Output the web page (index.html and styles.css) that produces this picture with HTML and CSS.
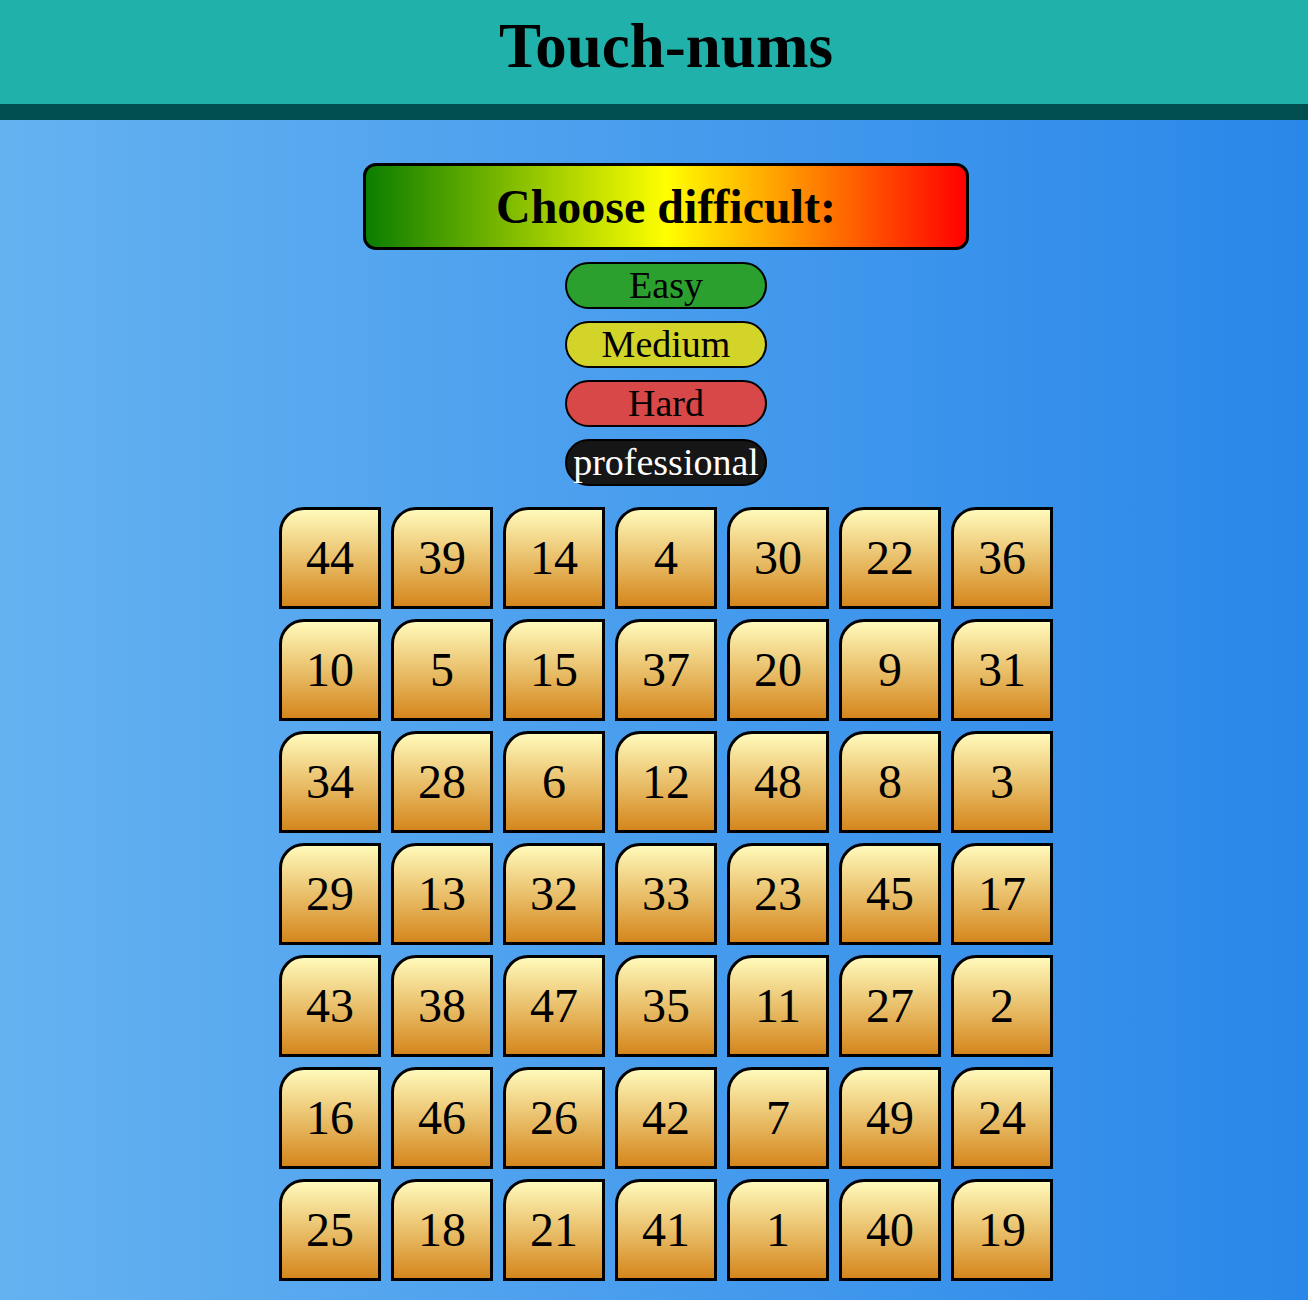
FILE: index.html
```html
<!DOCTYPE html>
<html lang="en">
<head>
<meta charset="utf-8">
<title>Touch-nums</title>
<link rel="stylesheet" href="styles.css">
</head>
<body>
<header class="top">
  <h1 class="title">Touch-nums</h1>
</header>
<main class="main">
  <div class="choose">Choose difficult:</div>
  <div class="levels">
    <button class="level easy">Easy</button>
    <button class="level medium">Medium</button>
    <button class="level hard">Hard</button>
    <button class="level pro">professional</button>
  </div>
  <div class="board">
    <div class="tile">44</div><div class="tile">39</div><div class="tile">14</div><div class="tile">4</div><div class="tile">30</div><div class="tile">22</div><div class="tile">36</div>
    <div class="tile">10</div><div class="tile">5</div><div class="tile">15</div><div class="tile">37</div><div class="tile">20</div><div class="tile">9</div><div class="tile">31</div>
    <div class="tile">34</div><div class="tile">28</div><div class="tile">6</div><div class="tile">12</div><div class="tile">48</div><div class="tile">8</div><div class="tile">3</div>
    <div class="tile">29</div><div class="tile">13</div><div class="tile">32</div><div class="tile">33</div><div class="tile">23</div><div class="tile">45</div><div class="tile">17</div>
    <div class="tile">43</div><div class="tile">38</div><div class="tile">47</div><div class="tile">35</div><div class="tile">11</div><div class="tile">27</div><div class="tile">2</div>
    <div class="tile">16</div><div class="tile">46</div><div class="tile">26</div><div class="tile">42</div><div class="tile">7</div><div class="tile">49</div><div class="tile">24</div>
    <div class="tile">25</div><div class="tile">18</div><div class="tile">21</div><div class="tile">41</div><div class="tile">1</div><div class="tile">40</div><div class="tile">19</div>
  </div>
</main>
</body>
</html>
```
FILE: styles.css
```css
html, body {
  margin: 0;
  padding: 0;
}
body {
  font-family: "Liberation Serif", "Times New Roman", serif;
  background: linear-gradient(to right, #65b2f1, #2a87e9);
  min-height: 1300px;
  color: #000;
}
.top {
  background: #20b2aa;
  border-bottom: 16px solid #024f4f;
  padding: 15px 0 26px 24px;
  text-align: center;
}
.title {
  margin: 0;
  font-size: 63px;
  line-height: 63px;
  font-weight: bold;
}
.main {
  display: flex;
  flex-direction: column;
  align-items: center;
  padding: 43px 0 0 24px;
}
.choose {
  box-sizing: border-box;
  width: 606px;
  height: 87px;
  border: 3px solid #000;
  border-radius: 13px;
  background: linear-gradient(to right, #0b7d00, #ffff00 50%, #ff0000);
  font-size: 48px;
  font-weight: bold;
  line-height: 81px;
  text-align: center;
}
.levels {
  display: flex;
  flex-direction: column;
  gap: 12px;
  margin-top: 12px;
}
.level {
  box-sizing: border-box;
  width: 202px;
  height: 47px;
  border: 2px solid #000;
  border-radius: 24px;
  padding: 0;
  font-family: "Liberation Serif", "Times New Roman", serif;
  font-size: 38px;
  line-height: 41px;
  color: #000;
  text-align: center;
}
.easy { background: #2ca02e; }
.medium { background: #d3d42a; }
.hard { background: #d84848; }
.pro { background: #161616; color: #fff; }
.board {
  display: grid;
  grid-template-columns: repeat(7, 102px);
  grid-auto-rows: 102px;
  gap: 10px;
  margin-top: 21px;
}
.tile {
  box-sizing: border-box;
  border: 3px solid #000;
  border-top-left-radius: 25px;
  background: linear-gradient(to bottom, #fffabb, #d4861c);
  font-size: 48px;
  line-height: 96px;
  text-align: center;
}
```
